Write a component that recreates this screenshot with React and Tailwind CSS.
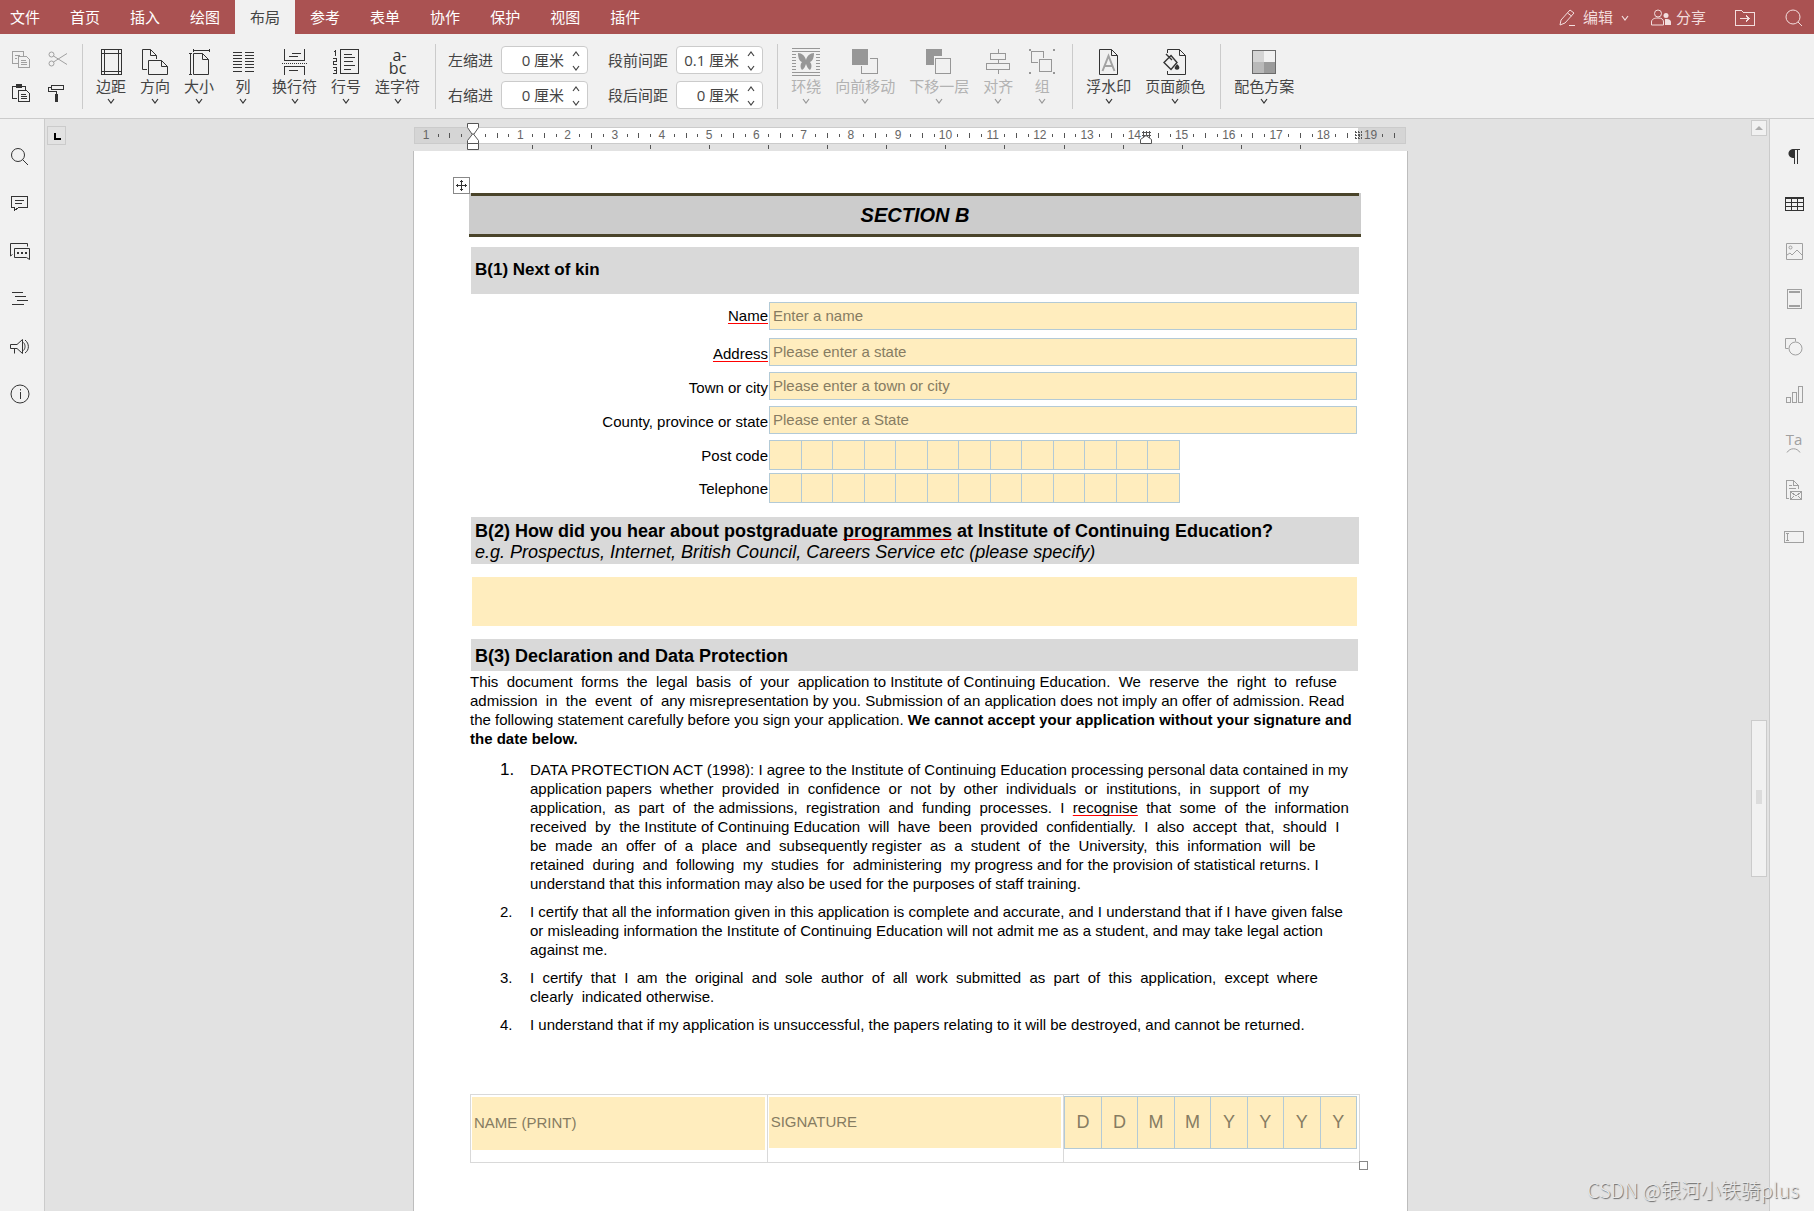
import React, { useState } from 'react';
import clsx from 'clsx';

const menuTabs = ['文件', '首页', '插入', '绘图', '布局', '参考', '表单', '协作', '保护', '视图', '插件'];

const declaration = [
    'This  document  forms  the  legal  basis  of  your  application to Institute of Continuing Education.  We  reserve  the  right  to  refuse',
    'admission  in  the  event  of  any misrepresentation by you. Submission of an application does not imply an offer of admission. Read',
];

const clauses = [
    [
        'DATA PROTECTION ACT (1998): I agree to the Institute of Continuing Education processing personal data contained in my',
        'application papers  whether  provided  in  confidence  or  not  by  other  individuals  or  institutions,  in  support  of  my',
        'application,  as  part  of  the admissions,  registration  and  funding  processes.  I  *recognise*  that  some  of  the  information',
        'received  by  the Institute of Continuing Education  will  have  been  provided  confidentially.  I  also  accept  that,  should  I',
        'be  made  an  offer  of  a  place  and  subsequently register  as  a  student  of  the  University,  this  information  will  be',
        'retained  during  and  following  my  studies  for  administering  my progress and for the provision of statistical returns. I',
        'understand that this information may also be used for the purposes of staff training.',
    ],
    [
        'I certify that all the information given in this application is complete and accurate, and I understand that if I have given false',
        'or misleading information the Institute of Continuing Education will not admit me as a student, and may take legal action',
        'against me.',
    ],
    [
        'I  certify  that  I  am  the  original  and  sole  author  of  all  work  submitted  as  part  of  this  application,  except  where',
        'clearly  indicated otherwise.',
    ],
    ['I understand that if my application is unsuccessful, the papers relating to it will be destroyed, and cannot be returned.'],
];

const Icon = ({ w, h, children, crisp = true, className }) => (
    <svg
        width={w}
        height={h}
        viewBox={`0 0 ${w} ${h}`}
        fill="none"
        stroke="currentColor"
        shapeRendering={crisp ? 'crispEdges' : 'auto'}
        className={className}
        aria-hidden="true"
    >
        {children}
    </svg>
);

const Chevron = ({ up }) => (
    <Icon w={8} h={8} crisp={false}>
        <path d={up ? 'M1 6l3-4 3 4' : 'M1 2l3 4 3-4'} strokeWidth="1.2" />
    </Icon>
);

/* Clipboard icons */
const CopyIcon = () => (
    <Icon w={18} h={17}>
        <path d="M5.5 12.5h-5v-12h11v4M3 4.5h5M3 7.5h2" />
        <path d="M6.5 5.5h8l3 3v8h-11zM9 9.5h5M9 11.5h6M9 13.5h6" />
    </Icon>
);

const CutIcon = () => (
    <Icon w={20} h={16} crisp={false}>
        <circle cx="3.5" cy="3.5" r="2.5" />
        <circle cx="3.5" cy="12.5" r="2.5" />
        <path d="M5.5 5L19 13.5M5.5 11L19 2.5" />
    </Icon>
);

const PasteIcon = () => (
    <Icon w={18} h={18}>
        <path d="M5 14.5H.5v-12h13v3" />
        <path d="M4 2h6" strokeWidth="4" />
        <path d="M6.5 6.5h8l3 3v8h-11zM9 10.5h5M9 12.5h6M9 14.5h6" />
    </Icon>
);

const RollerIcon = () => (
    <Icon w={16} h={18}>
        <path d="M3.5 1.5h12v4h-12zM3 3.5H.5v4h8V10" />
        <path d="M8.5 10v8" strokeWidth="3" />
    </Icon>
);

/* Ribbon icons */
const MarginsIcon = () => (
    <Icon w={21} h={26}>
        <path d="M.5.5h20v25H.5zM3.5 0v26M17.5 0v26M0 4.5h21M0 22.5h21" />
    </Icon>
);

const OrientationIcon = () => (
    <Icon w={27} h={26} crisp={false}>
        <path d="M5 20.5H.5V.5h8l6 6V10M8.5.5v6h6" />
        <path d="M6.5 11.5h13l6 6v8h-19zM19.5 11.5v6h6" />
    </Icon>
);

const SizeIcon = () => (
    <Icon w={21} h={26} crisp={false}>
        <path d="M4.5 1.5h16M4.5 0v3M20.5 0v3M1.5 4.5v21M0 4.5h3M0 25.5h3" />
        <path d="M4.5 4.5h9l6 6v15h-15zM13.5 4.5v6h6" />
    </Icon>
);

const ColumnsIcon = () => (
    <Icon w={21} h={26}>
        {[3, 6, 9, 12, 15, 18, 22].map((y) => (
            <path key={y} d={`M0 ${y + 0.5}h9M12 ${y + 0.5}h9`} />
        ))}
    </Icon>
);

const BreaksIcon = () => (
    <Icon w={25} h={26}>
        <path d="M2.5 0v11.5h20V0M10 4.5h9M7 7.5h9M2.5 26v-8.5h20V26M7 21.5h9" />
        <path d="M0 14.5h25" strokeDasharray="1 1" />
    </Icon>
);

const LineNumbersIcon = () => (
    <Icon w={26} h={26}>
        <path d="M7.5.5h18v24h-18zM11 5.5h8M11 8.5h11M11 12.5h9M11 16.5h11M11 20.5h7" />
        <path d="M1 2.5h1.5v-2V7M0 9.5h3.5v3H.5v3H4M0 18.5h3.5v6H0M1 21.5h2.5" />
    </Icon>
);

const HyphenationIcon = () => (
    <span className="flex flex-col text-base leading-[13px]">
        <span className="pl-1">a-</span>
        <span>bc</span>
    </span>
);

const WrapIcon = () => (
    <Icon w={28} h={28}>
        <path d="M0 .5h28M0 3.5h28M0 24.5h28M0 27.5h28" />
        {[6, 9, 12, 15, 18, 21].map((y) => (
            <path key={y} d={`M0 ${y + 0.5}h4M24 ${y + 0.5}h4`} />
        ))}
        <path
            d="M6 5c4 0 7 3 8 7 1-4 4-7 8-7 0 4-1 8-4 9 2 2 2 6 0 8-2-1-3-3-4-6-1 3-2 5-4 6-2-2-2-6 0-8-3-1-4-5-4-9z"
            fill="currentColor"
            stroke="none"
            shapeRendering="auto"
        />
    </Icon>
);

const ForwardIcon = () => (
    <Icon w={26} h={26}>
        <path d="M18 9.5h7.5v15h-16V17" />
        <path d="M0 0h16v16H0z" fill="currentColor" stroke="none" />
    </Icon>
);

const BackwardIcon = () => (
    <Icon w={26} h={26}>
        <path d="M0 0h16v7H8v9H0z" fill="currentColor" stroke="none" />
        <path d="M9.5 9.5h15v15h-15z" />
    </Icon>
);

const AlignIcon = () => (
    <Icon w={24} h={26}>
        <path d="M4.5 4.5h15v6h-15zM.5 14.5h23v6H.5zM12 0v4M12 11v3M12 21v4" />
    </Icon>
);

const GroupIcon = () => (
    <Icon w={26} h={26}>
        <path d="M9 13.5H2.5v-11h12v6M10.5 10.5h12v12h-12z" />
        <path d="M0 1h2M24 1h2M0 24h2M24 24h2" strokeWidth="2" />
    </Icon>
);

const WatermarkIcon = () => (
    <Icon w={20} h={26} crisp={false}>
        <path d="M.5.5h12l6 6v19H.5zM12.5.5v6h6" />
        <path d="M3.5 22l6-15 6 15M5.5 17h8" stroke="#a3a3a3" strokeWidth="2" />
    </Icon>
);

const PageColorIcon = () => (
    <Icon w={24} h={26} crisp={false}>
        <path d="M4.5 4V.5h12l6 6v19h-18V22M16.5.5v6h6" />
        <path d="M8 6.5l6 7-6 7-7-7zM3 5l6 6" strokeWidth="1.4" />
        <path d="M14 15c2 2 3 3 2 5-1 1-3 1-4 0-1-2 1-3 2-5z" fill="currentColor" stroke="none" />
    </Icon>
);

const ColorSchemeIcon = () => (
    <Icon w={24} h={24}>
        <path d="M0 0h12v12H0z" fill="#d4d4d4" stroke="none" />
        <path d="M0 12h12v12H0z" fill="#b9b9b9" stroke="none" />
        <path d="M12 12h12v12H12z" fill="#9b9b9b" stroke="none" />
        <path d="M.5.5h23v23H.5z" stroke="#6b6b6b" />
    </Icon>
);

const pageTools = [
    { label: '边距', icon: MarginsIcon },
    { label: '方向', icon: OrientationIcon },
    { label: '大小', icon: SizeIcon },
    { label: '列', icon: ColumnsIcon },
    { label: '换行符', icon: BreaksIcon },
    { label: '行号', icon: LineNumbersIcon },
    { label: '连字符', icon: HyphenationIcon },
];

const arrangeTools = [
    { label: '环绕', icon: WrapIcon },
    { label: '向前移动', icon: ForwardIcon },
    { label: '下移一层', icon: BackwardIcon },
    { label: '对齐', icon: AlignIcon },
    { label: '组', icon: GroupIcon },
];

const backgroundTools = [
    { label: '浮水印', icon: WatermarkIcon },
    { label: '页面颜色', icon: PageColorIcon },
];

const schemeTools = [{ label: '配色方案', icon: ColorSchemeIcon }];

/* Side panel icons */
const leftPanel = [
    {
        label: '查找',
        icon: (
            <Icon w={20} h={20} crisp={false}>
                <circle cx="8" cy="8" r="6.5" />
                <path d="M12.5 12.5l5.5 5.5" />
            </Icon>
        ),
    },
    {
        label: '批注',
        icon: (
            <Icon w={18} h={16}>
                <path d="M.5.5h16v11h-9l-4 3v-3h-3zM4 4.5h9M4 7.5h7" />
            </Icon>
        ),
    },
    {
        label: '聊天',
        icon: (
            <Icon w={20} h={17} crisp={false}>
                <path d="M2.5 11.5l-2 1.5V.5h17v3" />
                <path d="M4.5 5.5h15v11l-3-2h-12z" />
                <path d="M7 10h2M11 10h2M15 10h2" strokeWidth="2" />
            </Icon>
        ),
    },
    {
        label: '标题',
        icon: (
            <Icon w={18} h={14}>
                <path d="M1 .5h11M4 4.5h11M6 8.5h11M1 12.5h12" />
            </Icon>
        ),
    },
    {
        label: '反馈',
        icon: (
            <Icon w={20} h={18} crisp={false}>
                <path d="M.5 6.5H7l5.5-5v14l-5.5-5H.5zM4.5 10.5v5M13.5 4.5c2 2 2 6 0 8M15 2c4.5 3.5 4.5 10 0 13" />
            </Icon>
        ),
    },
    {
        label: '关于',
        icon: (
            <Icon w={20} h={20} crisp={false}>
                <circle cx="10" cy="10" r="9" />
                <path d="M10.5 8v7M10.5 5v1.5" />
            </Icon>
        ),
    },
];

const rightPanel = [
    {
        label: '段落设置',
        enabled: true,
        icon: (
            <Icon w={12} h={16} crisp={false}>
                <path d="M5 .5h7M6.5 0v15M9.5 0v15" />
                <path d="M6 0v9C2.5 9 .5 7 .5 4.5S2.5 0 6 0z" fill="currentColor" stroke="none" />
            </Icon>
        ),
    },
    {
        label: '表格设置',
        enabled: true,
        icon: (
            <Icon w={19} h={14}>
                <path d="M.5.5h18v13H.5zM0 5.5h19M0 9.5h19M6.5 1v13M12.5 1v13" />
                <path d="M0 1h19" strokeWidth="2" />
            </Icon>
        ),
    },
    {
        label: '图像设置',
        icon: (
            <Icon w={17} h={17} crisp={false}>
                <path d="M.5.5h16v16H.5zM1 12l3-2 2 2 5-5 5 5" />
                <circle cx="4.5" cy="4.5" r="1.5" />
            </Icon>
        ),
    },
    {
        label: '页眉页脚设置',
        icon: (
            <Icon w={15} h={20}>
                <path d="M.5.5h14v19H.5z" />
                <path d="M2 3h11M2 17h11" strokeWidth="2" />
            </Icon>
        ),
    },
    {
        label: '形状设置',
        icon: (
            <Icon w={18} h={18} crisp={false}>
                <path d="M3.5 10.5h-3V.5h10v3" />
                <circle cx="10.5" cy="10.5" r="6.5" />
            </Icon>
        ),
    },
    {
        label: '图表设置',
        icon: (
            <Icon w={17} h={17}>
                <path d="M.5 11.5h4v5h-4zM6.5 6.5h4v10h-4zM12.5.5h4v16h-4z" />
            </Icon>
        ),
    },
    {
        label: '文字艺术设置',
        icon: (
            <span className="flex flex-col items-center">
                <span className="text-[15px] leading-[15px]">Ta</span>
                <Icon w={15} h={6} crisp={false}>
                    <path d="M1 5.5c3-5 10-5 13 0" />
                </Icon>
            </span>
        ),
    },
    {
        label: '邮件合并设置',
        icon: (
            <Icon w={17} h={20}>
                <path d="M3 18.5H.5V.5h7l5 5V9M7.5.5v5h5M3 5.5h3M3 8.5h7" />
                <path d="M4.5 11.5h11v8h-11zM5 12l5 4 5-4M5 19l3-3M15 19l-3-3" />
            </Icon>
        ),
    },
    {
        label: '表单设置',
        icon: (
            <Icon w={20} h={12}>
                <path d="M.5.5h19v11H.5zM2 2.5h3M3.5 2v8M2 9.5h3" />
            </Icon>
        ),
    },
];

const Header = ({ active, onSelect }) => (
    <header className="flex h-[34px] shrink-0 items-stretch bg-[#aa5252] text-[15px] text-white">
        <nav className="flex">
            {menuTabs.map((tab, i) => (
                <button
                    key={tab}
                    onClick={() => onSelect(tab)}
                    className={clsx(
                        'pr-[15px]',
                        i === 0 ? 'pl-[10px]' : 'pl-[15px]',
                        active === tab && 'bg-[#f1f1f1] text-[#444]'
                    )}
                >
                    {tab}
                </button>
            ))}
        </nav>
        <div className="ml-auto flex items-center pt-px pr-[11px] text-[#f3dede]">
            <button className="mr-[22px] flex items-center gap-2">
                <Icon w={16} h={17} crisp={false}>
                    <path d="M1 16l1-5L11 1l4 3L6 14l-5 2zM8.5 4l4 3M10 16.5h6" />
                </Icon>
                <span>编辑</span>
                <Chevron />
            </button>
            <button className="mr-[29px] flex items-center gap-[5px]">
                <Icon w={20} h={17} crisp={false}>
                    <circle cx="7" cy="4.5" r="3.5" />
                    <path d="M.5 16v-3c0-3 3-4 6.5-4s5.500 1 5.500 4v3z" />
                    <circle cx="15" cy="6.5" r="2.5" fill="currentColor" stroke="none" />
                    <path d="M14 16v-6h2c2.500 0 4 1.500 4 3v3z" fill="currentColor" stroke="none" />
                </Icon>
                <span>分享</span>
            </button>
            <button aria-label="打开文件所在位置" className="mr-[30px]">
                <Icon w={20} h={16}>
                    <path d="M.5.5h6l2 2h11v13H.5zM5 8.5h9M11 5.5l3 3-3 3" />
                </Icon>
            </button>
            <button aria-label="查找">
                <Icon w={18} h={18} crisp={false}>
                    <circle cx="8" cy="8" r="7" />
                    <path d="M13 13l4 4" />
                </Icon>
            </button>
        </div>
    </header>
);

const Separator = () => <div className="mt-[10px] mr-[6px] ml-2 h-[65px] w-px shrink-0 bg-[#cbcbcb]" />;

const ToolGroup = ({ tools, disabled }) => (
    <div className={clsx('flex', disabled ? 'text-[#979797]' : 'text-[#333]')}>
        {tools.map(({ label, icon: ToolIcon }) => (
            <button key={label} disabled={disabled} className="flex min-w-11 flex-col items-center px-[7px] pt-[14px]">
                <span className="flex h-7 items-center">
                    <ToolIcon />
                </span>
                <span className={clsx('mb-px leading-5 whitespace-nowrap', disabled ? 'text-[#b2b2b2]' : 'text-[#444]')}>
                    {label}
                </span>
                <Chevron />
            </button>
        ))}
    </div>
);

const SpinField = ({ label, id, value }) => (
    <div className="flex items-center justify-between gap-2">
        <label htmlFor={id}>{label}</label>
        <div className="flex h-7 w-[87px] items-center rounded-sm border border-[#cbcbcb] bg-white">
            <input id={id} defaultValue={value} className="w-full min-w-0 flex-1 pl-1 text-right outline-none" />
            <div className="flex w-[23px] flex-col items-center gap-[6px] pt-px">
                <button aria-label={`${label} +`}>
                    <Chevron up />
                </button>
                <button aria-label={`${label} -`}>
                    <Chevron />
                </button>
            </div>
        </div>
    </div>
);

const Ribbon = () => (
    <div className="flex h-[85px] shrink-0 border-b border-[#cbcbcb] bg-[#f1f1f1] text-[15px] text-[#444]">
        <div className="grid grid-cols-2 content-start gap-x-4 gap-y-4 pt-4 pr-[6px] pl-3">
            <button aria-label="复制" disabled className="h-[18px] w-[18px] text-[#a0a0a0]">
                <CopyIcon />
            </button>
            <button aria-label="剪切" disabled className="h-[18px] w-5 text-[#a0a0a0]">
                <CutIcon />
            </button>
            <button aria-label="粘贴" className="h-[18px] w-[18px] text-[#333]">
                <PasteIcon />
            </button>
            <button aria-label="复制样式" className="h-[18px] w-5 text-[#333]">
                <RollerIcon />
            </button>
        </div>
        <Separator />
        <ToolGroup tools={pageTools} />
        <Separator />
        <div className="flex gap-5 px-[6px] pt-3 leading-7">
            <div className="flex flex-col gap-[7px]">
                <SpinField id="indent-left" label="左缩进" value="0 厘米" />
                <SpinField id="indent-right" label="右缩进" value="0 厘米" />
            </div>
            <div className="flex flex-col gap-[7px]">
                <SpinField id="space-before" label="段前间距" value="0.1 厘米" />
                <SpinField id="space-after" label="段后间距" value="0 厘米" />
            </div>
        </div>
        <Separator />
        <ToolGroup tools={arrangeTools} disabled />
        <Separator />
        <ToolGroup tools={backgroundTools} />
        <Separator />
        <ToolGroup tools={schemeTools} />
    </div>
);

// One centimetre on the ruler at the current zoom
const CM = 47.24;
const ORIGIN = 60;

const Ruler = () => {
    const ticks = [];
    for (let q = -4; q <= 78; q++) {
        if (q % 4 !== 0) ticks.push(q);
    }
    const numbers = Array.from({ length: 19 }, (_, i) => i + 1);
    const tabs = Array.from({ length: 14 }, (_, i) => i + 1);

    return (
        <svg width="995" height="32" viewBox="0 0 995 32" className="block shrink-0" role="img" aria-label="标尺">
            <g shapeRendering="crispEdges">
                <rect x="1.5" y="8.5" width="991" height="16" fill="#d5d5d5" stroke="#cbcbcb" />
                <rect x="60" y="9" width="885" height="15" fill="#fff" />
                {ticks.map((q) => (
                    <rect
                        key={q}
                        x={Math.round(ORIGIN + (q * CM) / 4)}
                        y={q % 2 === 0 ? 14 : 15}
                        width="1"
                        height={q % 2 === 0 ? 5 : 3}
                        fill="#555"
                    />
                ))}
                {tabs.map((t) => (
                    <rect key={t} x={Math.round(ORIGIN + t * 59.05)} y="26" width="1" height="4" fill="#555" />
                ))}
                <path d="M942.5 12v9M945.5 12v9M948.5 12v9M942 13.5h7M942 16.5h7M942 19.5h7" stroke="#555" strokeDasharray="2 1" />
                <path d="M730.5 12v7M733.5 12v7M736.5 12v7M729 13.5h9M729 16.5h9" stroke="#555" />
            </g>
            <g fill="#666" fontSize="12" textAnchor="middle" fontFamily="Liberation Sans, sans-serif">
                <text x="13" y="20">1</text>
                {numbers.map((n) => (
                    <text key={n} x={ORIGIN + n * CM} y="20">
                        {n}
                    </text>
                ))}
            </g>
            <g fill="#fff" stroke="#555">
                <path d="M54.5 4.5h11v4l-5.5 8-5.5-8z" />
                <path d="M54.5 24.5v-3l5.5-7 5.5 7v3z" />
                <path d="M54.5 24.5h11v6h-11z" />
                <path d="M727.5 24.5v-4l5.5-4 5.5 4v4z" />
            </g>
        </svg>
    );
};

const SidePanel = ({ items, className }) => (
    <aside className={clsx('w-[45px] shrink-0 bg-[#f1f1f1] pt-[14px]', className)}>
        {items}
    </aside>
);

const Misspelt = ({ children }) => (
    <span className="underline decoration-[#f00] decoration-1 underline-offset-2 [text-decoration-skip-ink:none]">
        {children}
    </span>
);

const renderLine = (line) =>
    line.split('*').map((part, i) => (i % 2 === 1 ? <Misspelt key={i}>{part}</Misspelt> : part));

const fieldStyle =
    'min-w-0 bg-[#ffedbe] outline-none placeholder:text-[#867c62] placeholder:opacity-100';

const FormRow = ({ id, label, misspelt, children, className }) => (
    <div className={clsx('flex items-start', className)}>
        <label htmlFor={id} className={clsx('w-[298px] shrink-0 pr-px text-right', id === 'name' ? 'leading-7' : 'leading-8')}>
            {misspelt ? <Misspelt>{label}</Misspelt> : label}
        </label>
        {children}
    </div>
);

const TextRow = ({ id, placeholder, ...row }) => (
    <FormRow id={id} {...row}>
        <input
            id={id}
            placeholder={placeholder}
            className={clsx(fieldStyle, 'mr-[2px] h-7 flex-1 border border-[#b3cad6] px-[3px] pb-[2px]')}
        />
    </FormRow>
);

const CombRow = ({ id, label, className }) => (
    <FormRow id={id} label={label} className={className}>
        <div className="flex h-[30px] w-[411px] border border-r-0 border-[#b3cad6]">
            {Array.from({ length: 13 }, (_, i) => (
                <input
                    key={i}
                    id={i === 0 ? id : undefined}
                    aria-label={`${label} ${i + 1}`}
                    maxLength={1}
                    className={clsx(fieldStyle, 'w-0 flex-1 border-r border-[#b3cad6] text-center')}
                />
            ))}
        </div>
    </FormRow>
);

const Paper = () => (
    <article className="w-[995px] flex-1 border-x border-[#bdbdbd] bg-white pt-[42px] pr-12 pl-[57px] font-['Liberation_Sans',Arial,sans-serif] text-[15px] text-black">
        <div className="relative -mx-[2px] bg-[#ccc]">
            <button
                aria-label="移动表格"
                className="absolute -top-4 -left-4 flex h-[17px] w-[17px] items-center justify-center border border-[#888] bg-white text-[#333]"
            >
                <Icon w={11} h={11}>
                    <path d="M5.5 0v11M0 5.5h11M4 1.5h3M4 9.5h3M1.5 4v3M9.5 4v3" />
                </Icon>
            </button>
            <div className="mx-[2px] h-[3px] bg-[#4a442a]" />
            <h1 className="border-b-[3px] border-[#4a442a] text-center text-xl leading-[38px] font-bold italic">SECTION B</h1>
        </div>

        <h2 className="mt-[10px] bg-[#d9d9d9] pb-[2px] pl-1 text-[17px] leading-[45px] font-bold">B(1) Next of kin</h2>

        <div className="mt-2">
            <TextRow id="name" label="Name" misspelt placeholder="Enter a name" className="mb-2 h-7" />
            <TextRow id="address" label="Address" misspelt placeholder="Please enter a state" className="mb-[6px] h-7" />
            <TextRow id="town" label="Town or city" placeholder="Please enter a town or city" className="mb-[6px] h-7" />
            <TextRow id="county" label="County, province or state" placeholder="Please enter a State" className="mb-[6px] h-7" />
            <CombRow id="postcode" label="Post code" className="mb-[3px] h-[30px]" />
            <CombRow id="telephone" label="Telephone" className="h-[30px]" />
        </div>

        <div className="mt-[14px] bg-[#d9d9d9] pt-1 pb-px pl-1 text-[18px] leading-[21px]">
            <h2 className="font-bold">
                B(2) How did you hear about postgraduate <Misspelt>programmes</Misspelt> at Institute of Continuing Education?
            </h2>
            <p className="italic">e.g. Prospectus, Internet, British Council, Careers Service etc (please specify)</p>
        </div>
        <div className="mt-[13px] mr-[2px] ml-px flex">
            <textarea aria-label="How did you hear about us" className={clsx(fieldStyle, 'h-[49px] flex-1 resize-none p-1')} />
        </div>

        <h2 className="mt-[13px] mr-px bg-[#d9d9d9] pt-[3px] pl-1 text-[18px] leading-[29px] font-bold">
            B(3) Declaration and Data Protection
        </h2>
        <p className="mt-px -ml-px leading-[19px] whitespace-pre">
            {declaration.join('\n')}
            {'\nthe following statement carefully before you sign your application. '}
            <strong>{'We cannot accept your application without your signature and\nthe date below.'}</strong>
        </p>

        <ol className="mt-3 flex flex-col gap-[9px] leading-[19px]">
            {clauses.map((lines, i) => (
                <li key={i} className="flex">
                    <span className={clsx('w-[59px] shrink-0 pl-[29px]', i === 0 && 'text-[17px]')}>{i + 1}.</span>
                    <p className="whitespace-pre">
                        {lines.map((line, n) => (
                            <React.Fragment key={n}>
                                {n > 0 && '\n'}
                                {renderLine(line)}
                            </React.Fragment>
                        ))}
                    </p>
                </li>
            ))}
        </ol>

        <div className="relative -mx-px mt-[60px] flex h-[69px] border border-[#d9d9d9]">
            <div className="flex flex-1 items-start border-r border-[#d9d9d9] pt-[2px] pr-[2px] pl-px">
                <input aria-label="Name" placeholder="NAME (PRINT)" className={clsx(fieldStyle, 'h-[53px] flex-1 px-[2px] pb-[2px]')} />
            </div>
            <div className="flex flex-1 items-start border-r border-[#d9d9d9] pt-[2px] pr-[2px] pl-px">
                <input aria-label="Signature" placeholder="SIGNATURE" className={clsx(fieldStyle, 'h-[51px] flex-1 px-[2px] pb-[2px]')} />
            </div>
            <div className="flex flex-1 items-start pt-px pr-[2px]">
                <div className="flex h-[53px] flex-1 border border-r-0 border-[#b3cad6]">
                    {'DDMMYYYY'.split('').map((c, i) => (
                        <input
                            key={i}
                            aria-label={`Date ${i + 1}`}
                            placeholder={c}
                            maxLength={1}
                            className={clsx(fieldStyle, 'w-0 flex-1 border-r border-[#b3cad6] text-center text-[18px]')}
                        />
                    ))}
                </div>
            </div>
            <div className="absolute -right-[9px] -bottom-2 h-[9px] w-[9px] border border-[#888] bg-white" />
        </div>
    </article>
);

const App = () => {
    const [activeTab, setActiveTab] = useState('布局');

    return (
        <div className="relative flex h-screen flex-col overflow-hidden bg-[#e2e2e2] font-['Open_Sans','Noto_Sans_CJK_SC',sans-serif]">
            <Header active={activeTab} onSelect={setActiveTab} />
            <Ribbon />

            <div className="flex min-h-0 flex-1">
                <SidePanel
                    className="border-r border-[#cbcbcb]"
                    items={
                        <div className="grid h-[285px] grid-rows-6">
                            {leftPanel.map(({ label, icon }) => (
                                <button key={label} aria-label={label} className="mr-1 flex items-center justify-center text-[#333]">
                                    {icon}
                                </button>
                            ))}
                        </div>
                    }
                />

                <main className="flex min-w-0 flex-1">
                    <div className="w-[26px] shrink-0 pt-[7px] pl-[2px]">
                        <button aria-label="制表位" className="flex h-[19px] w-[19px] items-center justify-center border border-[#cbcbcb] pt-px pl-px text-black">
                            <Icon w={7} h={7}>
                                <path d="M1 0v6h6" strokeWidth="2" />
                            </Icon>
                        </button>
                    </div>
                    <div className="flex min-w-0 flex-1 flex-col items-center overflow-hidden">
                        <Ruler />
                        <Paper />
                    </div>
                    <div className="flex w-[19px] shrink-0 flex-col items-start pt-px pl-px">
                        <button aria-label="向上滚动" className="flex h-4 w-4 items-center justify-center border border-[#cbcbcb] bg-[#f1f1f1]">
                            <Icon w={8} h={4} crisp={false}>
                                <path d="M0 4l4-4 4 4z" fill="#adadad" stroke="none" />
                            </Icon>
                        </button>
                        <div className="flex w-4 flex-1 flex-col">
                            <div className="flex-[584]" />
                            <div className="flex h-[157px] items-center justify-center border border-[#cbcbcb] bg-[#f1f1f1] pb-1">
                                <div className="h-[14px] w-[6px] bg-[#dcdcdc]" />
                            </div>
                            <div className="flex-[334]" />
                        </div>
                    </div>
                </main>

                <SidePanel
                    className="border-l border-[#cbcbcb]"
                    items={
                        <div className="grid h-[428px] grid-rows-9">
                            {rightPanel.map(({ label, icon, enabled }) => (
                                <button
                                    key={label}
                                    aria-label={label}
                                    disabled={!enabled}
                                    className={clsx('ml-1 flex items-center justify-center', enabled ? 'text-[#333]' : 'text-[#a0a0a0]')}
                                >
                                    {icon}
                                </button>
                            ))}
                        </div>
                    }
                />
            </div>

            <div className="pointer-events-none absolute right-[15px] bottom-[5px] font-['Noto_Sans_CJK_SC',sans-serif] text-[20px] leading-8 font-light text-[#e8e8e8] [text-shadow:1px_1px_1px_#666]">
                CSDN @银河小铁骑plus
            </div>
        </div>
    );
};

export default App;
